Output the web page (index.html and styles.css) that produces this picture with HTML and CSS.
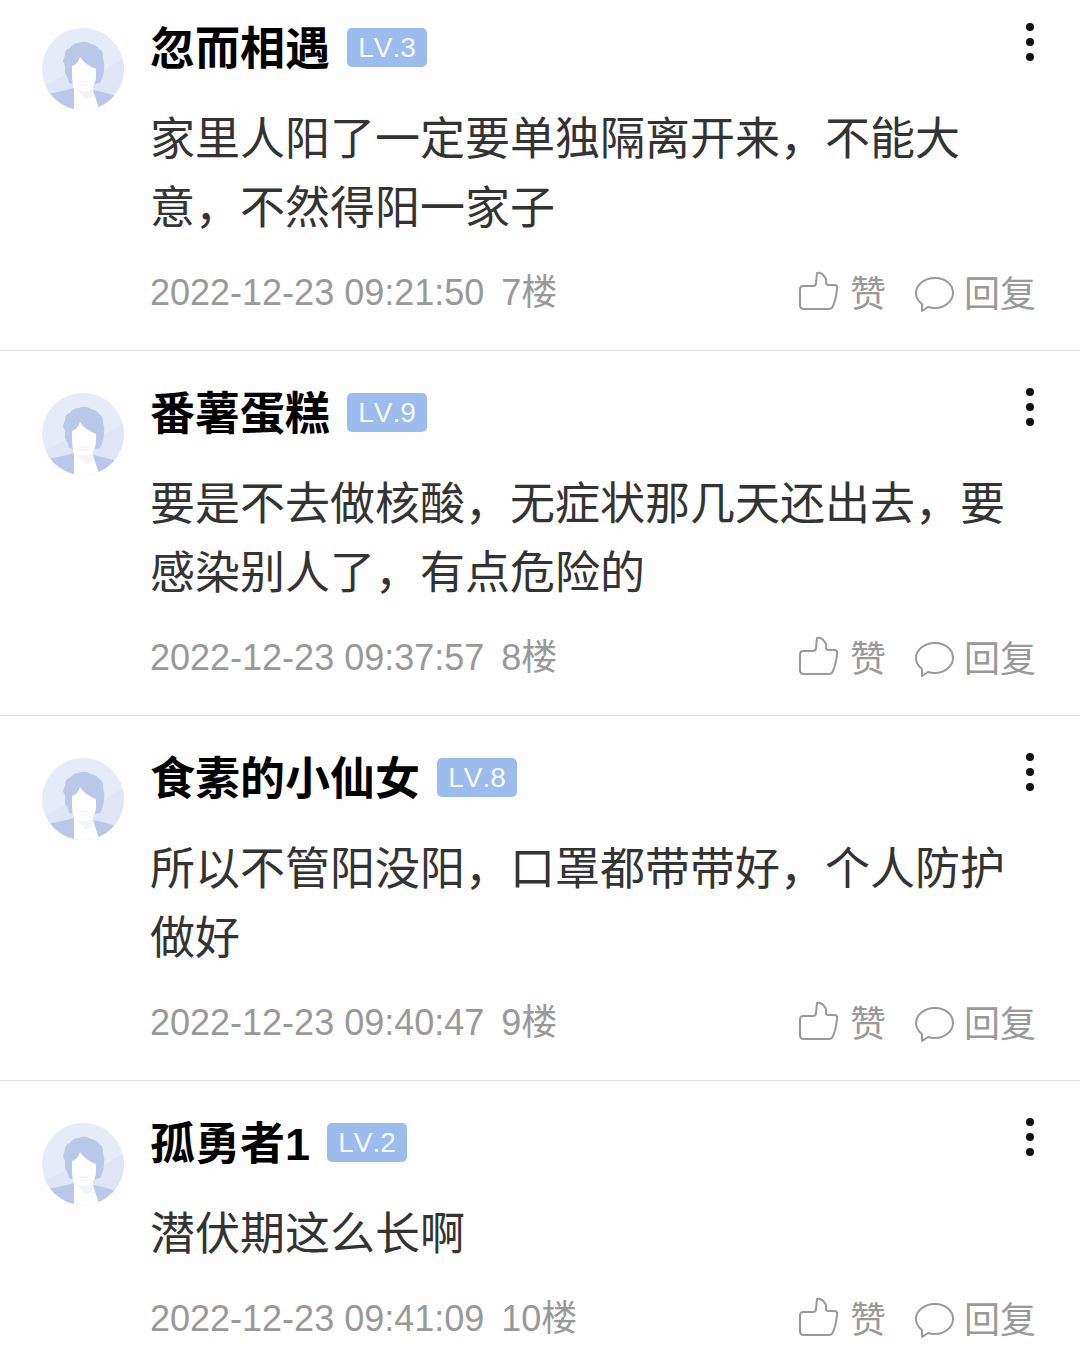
FILE: index.html
```html
<!DOCTYPE html>
<html lang="zh-CN">
<head>
    <meta charset="UTF-8">
    <meta name="viewport" content="width=device-width, initial-scale=1.0">
    <title>评论</title>
    <link rel="stylesheet" href="styles.css">
</head>
<body>
    <!-- 公用图标 -->
    <svg class="sprite" aria-hidden="true">
        <symbol id="icon-avatar" viewBox="0 0 84 84">
            <clipPath id="avatar-clip"><circle cx="42" cy="41" r="41"/></clipPath>
            <g clip-path="url(#avatar-clip)">
                <rect width="84" height="84" fill="#e5ebf7"/>
                <path d="M0 60 L26 46 L60 44 L84 29 V84 H0z" fill="#dfe5f4"/>
                <path d="M6 66 Q18 64 33 60 V84 H6z M52 62 Q64 64 78 69 V84 H59z" fill="#b9c8e8"/>
                <path d="M31 56 L28 55 Q27 49 24 45 L24 38 L22 33 L24 27 Q24 21 29 20 Q32 15 38 15 Q44 12 50 16 Q56 17 58 21 Q62 22 62 29 Q64 36 63 42 Q62 50 59 55 L54 56z" fill="#b9c7e8"/>
                <path d="M31 38 Q37 36 39 29 Q44 37 55 41 V48 Q55 54 52 58 V63 L59 84 H33 V60 Q31 55 31 48z" fill="#fff"/>
                <path d="M38 54 H47 M39 57 H47" stroke="#ebecf5" fill="none"/>
                <path d="M35 61 Q43 65 51 61 L52 67 Q47 73 43 70z" fill="#f3f4fa"/>
            </g>
        </symbol>
        <symbol id="icon-like" viewBox="0 0 42 48">
            <path d="M7 15 H17 Q20 15 20 12 L21 2 Q25 1 28 5 Q31 8 30 12 Q30 14 33 14 H38 Q42 14 41 18 Q40 28 37 35 Q36 38 33 38 H8 Q4 38 4 34 V19 Q4 15 7 15z"/>
        </symbol>
        <symbol id="icon-reply" viewBox="0 0 40 36">
            <path d="M8 27 C4 24 2 20 2 16 C2 8 10 1 21 1 S39 8 39 16 S31 31 21 31 Q17 31 14 30 L8 34z"/>
        </symbol>
        <symbol id="icon-more" viewBox="0 0 8 38">
            <circle cx="4" cy="4" r="4"/>
            <circle cx="4" cy="19" r="4"/>
            <circle cx="4" cy="34" r="4"/>
        </symbol>
    </svg>

    <main class="comments">
        <article class="comment">
            <svg class="avatar" role="img" aria-label="头像"><use href="#icon-avatar"/></svg>
            <div class="comment-main">
                <header class="comment-header">
                    <h2 class="name">忽而相遇</h2>
                    <span class="level">LV.3</span>
                    <button class="more" aria-label="更多"><svg><use href="#icon-more"/></svg></button>
                </header>
                <p class="text">家里人阳了一定要单独隔离开来，不能大意，不然得阳一家子</p>
                <footer class="comment-footer">
                    <time>2022-12-23 09:21:50</time>
                    <span class="floor">7楼</span>
                    <button class="action like"><svg><use href="#icon-like"/></svg>赞</button>
                    <button class="action reply"><svg><use href="#icon-reply"/></svg>回复</button>
                </footer>
            </div>
        </article>

        <article class="comment">
            <svg class="avatar" role="img" aria-label="头像"><use href="#icon-avatar"/></svg>
            <div class="comment-main">
                <header class="comment-header">
                    <h2 class="name">番薯蛋糕</h2>
                    <span class="level">LV.9</span>
                    <button class="more" aria-label="更多"><svg><use href="#icon-more"/></svg></button>
                </header>
                <p class="text">要是不去做核酸，无症状那几天还出去，要感染别人了，有点危险的</p>
                <footer class="comment-footer">
                    <time>2022-12-23 09:37:57</time>
                    <span class="floor">8楼</span>
                    <button class="action like"><svg><use href="#icon-like"/></svg>赞</button>
                    <button class="action reply"><svg><use href="#icon-reply"/></svg>回复</button>
                </footer>
            </div>
        </article>

        <article class="comment">
            <svg class="avatar" role="img" aria-label="头像"><use href="#icon-avatar"/></svg>
            <div class="comment-main">
                <header class="comment-header">
                    <h2 class="name">食素的小仙女</h2>
                    <span class="level">LV.8</span>
                    <button class="more" aria-label="更多"><svg><use href="#icon-more"/></svg></button>
                </header>
                <p class="text">所以不管阳没阳，口罩都带带好，个人防护做好</p>
                <footer class="comment-footer">
                    <time>2022-12-23 09:40:47</time>
                    <span class="floor">9楼</span>
                    <button class="action like"><svg><use href="#icon-like"/></svg>赞</button>
                    <button class="action reply"><svg><use href="#icon-reply"/></svg>回复</button>
                </footer>
            </div>
        </article>

        <article class="comment">
            <svg class="avatar" role="img" aria-label="头像"><use href="#icon-avatar"/></svg>
            <div class="comment-main">
                <header class="comment-header">
                    <h2 class="name">孤勇者1</h2>
                    <span class="level">LV.2</span>
                    <button class="more" aria-label="更多"><svg><use href="#icon-more"/></svg></button>
                </header>
                <p class="text">潜伏期这么长啊</p>
                <footer class="comment-footer">
                    <time>2022-12-23 09:41:09</time>
                    <span class="floor">10楼</span>
                    <button class="action like"><svg><use href="#icon-like"/></svg>赞</button>
                    <button class="action reply"><svg><use href="#icon-reply"/></svg>回复</button>
                </footer>
            </div>
        </article>
    </main>
</body>
</html>
```
FILE: styles.css
```css
* {
    box-sizing: border-box;
}
body {
    margin: 0;
    background: #fefefe;
    color: #333;
    font-family: "Liberation Sans", "Noto Sans CJK SC", sans-serif;
}
.sprite {
    position: absolute;
    width: 0;
    height: 0;
}
.comment {
    display: flex;
    align-items: flex-start;
    gap: 25px;
    padding: 42px 44px 37px 41px;
    border-bottom: 1px solid #e0e0e0;
}
.comment:first-child {
    padding-top: 28px;
}
.comment:last-child {
    padding-bottom: 20px;
    border-bottom: none;
}
.avatar {
    flex: none;
    width: 84px;
    height: 84px;
}
.comment-main {
    flex: 1;
    min-width: 0;
}
.comment-header {
    display: flex;
    align-items: flex-start;
    gap: 17px;
    height: 40px;
}
.name {
    margin: 0;
    color: #000;
    font-size: 45px;
    font-weight: bold;
    line-height: 44px;
}
.level {
    width: 80px;
    border-radius: 5px;
    background: #9bbcec;
    color: #f4f9ff;
    font-size: 28px;
    font-kerning: none;
    line-height: 39px;
    text-align: center;
}
button {
    padding: 0;
    border: none;
    background: none;
    color: inherit;
    font-family: inherit;
    cursor: pointer;
}
.more {
    width: 10px;
    height: 38px;
    margin-left: auto;
    margin-top: -5px;
    color: #111;
}
.more svg {
    display: block;
    width: 8px;
    height: 38px;
    fill: currentColor;
}
.text {
    margin: 37px 0 30px;
    font-size: 45px;
    line-height: 69px;
}
.comment-footer {
    display: flex;
    align-items: center;
    height: 40px;
    color: #999;
    font-size: 36px;
    line-height: 40px;
}
.floor {
    margin-left: 17px;
}
.action {
    display: flex;
    align-items: center;
    padding-top: 4px;
    font-size: 36px;
    line-height: 40px;
}
.action svg {
    fill: none;
    stroke: currentColor;
    stroke-width: 2;
    stroke-linejoin: round;
}
.like {
    gap: 12px;
    margin-left: auto;
}
.like svg {
    width: 42px;
    height: 48px;
}
.reply {
    gap: 10px;
    margin-left: 28px;
}
.reply svg {
    width: 40px;
    height: 36px;
}
```
